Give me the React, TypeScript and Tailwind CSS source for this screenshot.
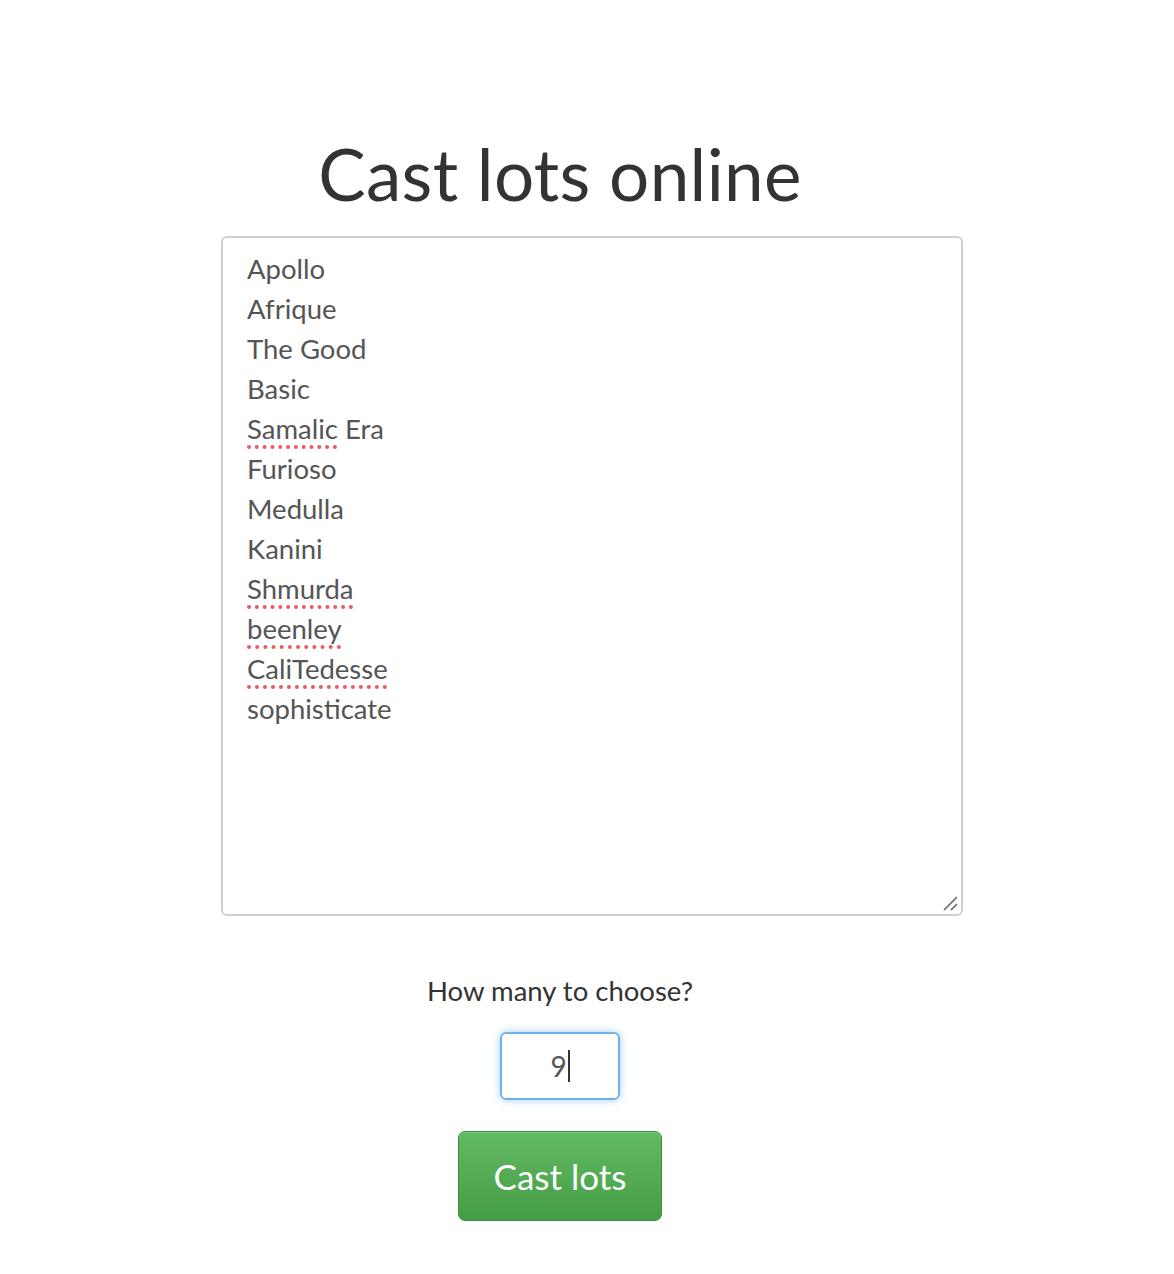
import React from "react";

const names: { text: string; typo?: string; rest?: string }[] = [
  { text: "Apollo" },
  { text: "Afrique" },
  { text: "The Good" },
  { text: "Basic" },
  { text: "", typo: "Samalic", rest: " Era" },
  { text: "Furioso" },
  { text: "Medulla" },
  { text: "Kanini" },
  { text: "", typo: "Shmurda" },
  { text: "", typo: "beenley" },
  { text: "", typo: "CaliTedesse" },
  { text: "sophisticate" },
];

const App: React.FC = () => {
  return (
    <div className="min-h-[1274px] bg-white font-['Lato','Open_Sans',sans-serif] text-[#333]">
      <div className="w-[1120px] flex flex-col items-center pt-[133px]">
        <h1 className="text-[71px] leading-[82px] text-[#333] tracking-[0.3px]">Cast lots online</h1>

        <div className="relative self-start ml-[221px] mt-[21px] w-[742px] h-[680px] border-2 border-[#cfcfcf] rounded-[6px] pl-[24px] pt-[11px] text-[27.5px] leading-[40px] text-[#555]">
          {names.map((n, i) => (
            <div key={i}>
              {n.typo ? (
                <>
                  <span className="underline decoration-dotted decoration-[#ec5a60] decoration-[4px] underline-offset-[6px]">
                    {n.typo}
                  </span>
                  {n.rest}
                </>
              ) : (
                n.text
              )}
            </div>
          ))}
          <svg className="absolute right-[2px] bottom-[2px]" width="18" height="18" viewBox="0 0 18 18">
            <path d="M3 16 L16 3 M10 16 L16 10" stroke="#666" strokeWidth="1.6" />
          </svg>
        </div>

        <div className="mt-[58px] text-[27.5px] leading-[34px] text-[#333]">How many to choose?</div>

        <div className="mt-[24px] w-[120px] h-[68px] border-2 border-[#6fb1e8] rounded-[6px] shadow-[0_0_8px_rgba(102,175,233,0.6)] flex items-center justify-center text-[28px] text-[#555]">
          <span>9</span>
          <span className="w-[2px] h-[32px] bg-[#333] ml-[1px]" />
        </div>

        <button className="mt-[31px] w-[204px] h-[90px] rounded-[7px] border border-[#3f8e3f] bg-gradient-to-b from-[#62bb62] to-[#449c44] text-white text-[35px] shadow-[inset_0_1px_0_rgba(255,255,255,0.2)]">
          Cast lots
        </button>
      </div>
    </div>
  );
};

export default App;
